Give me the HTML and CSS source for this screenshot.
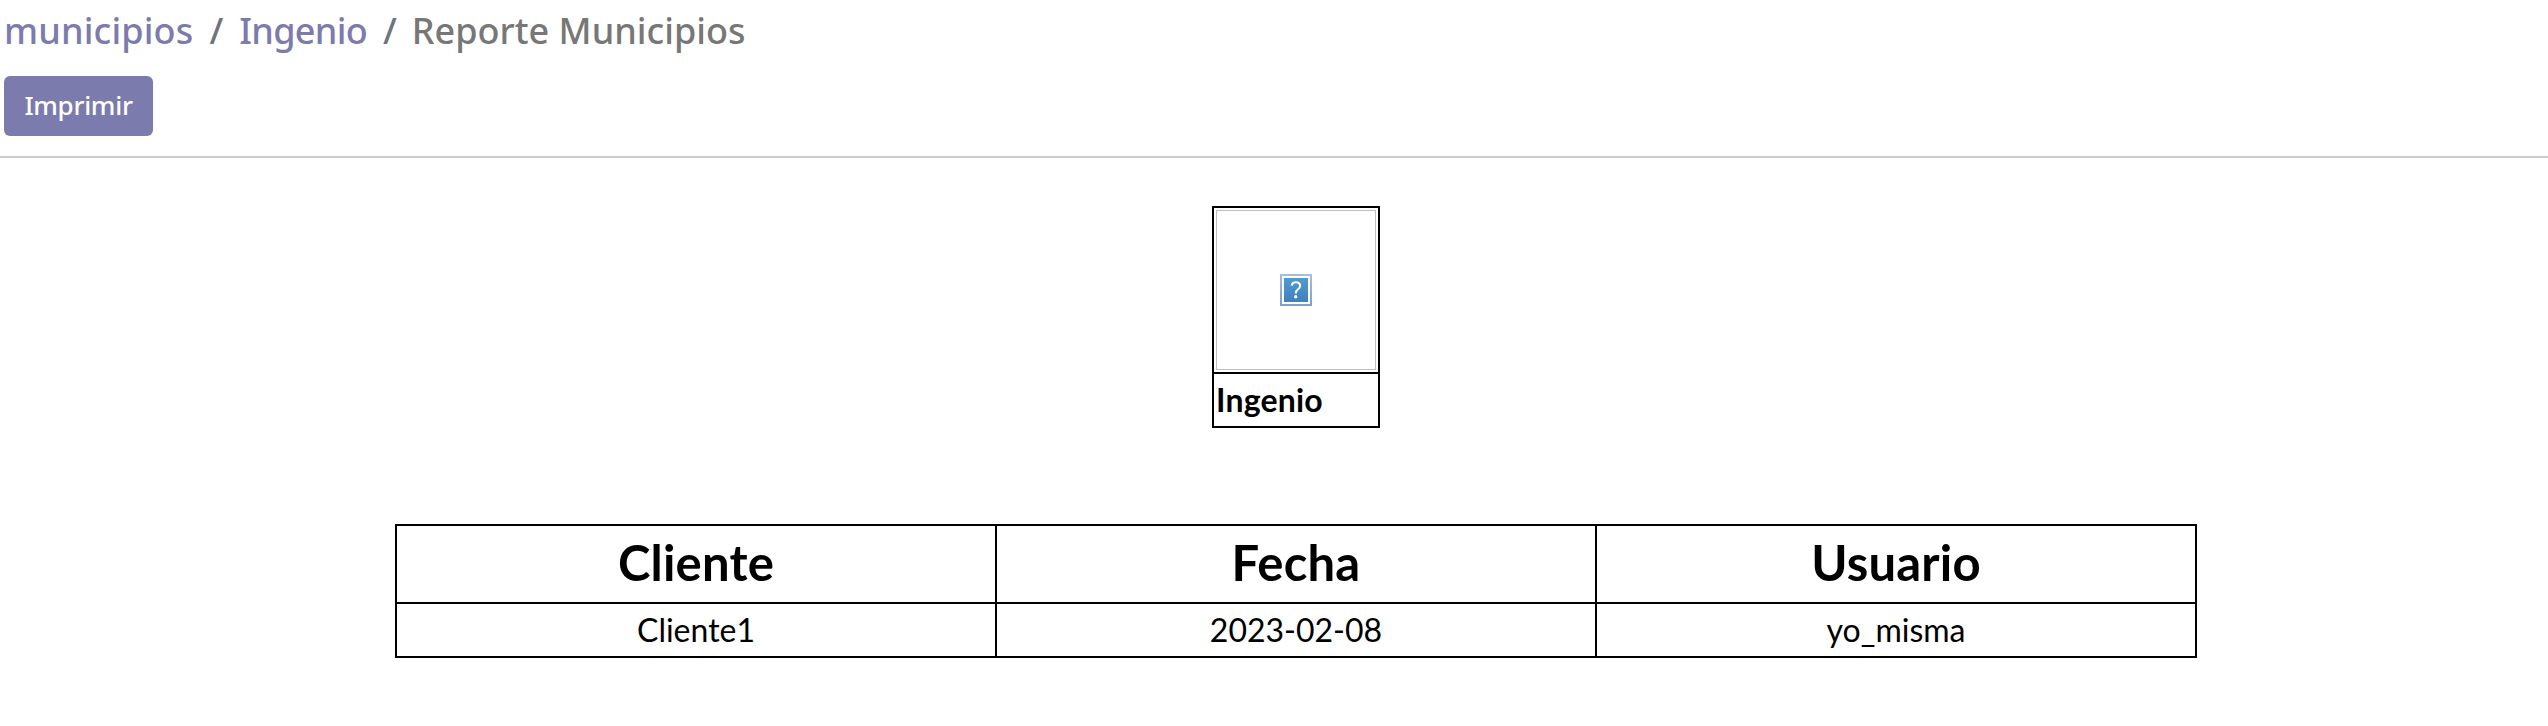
FILE: index.html
```html
<!DOCTYPE html>
<html lang="es">
<head>
<meta charset="utf-8">
<title>Reporte Municipios</title>
<link rel="stylesheet" href="styles.css">
</head>
<body>
<header class="control-panel">
  <nav class="breadcrumb">
    <a class="crumb crumb-first">municipios</a><span class="sep">/</span><a class="crumb crumb-second">Ingenio</a><span class="sep">/</span><span class="crumb current">Reporte Municipios</span>
  </nav>
  <button class="print" type="button">Imprimir</button>
</header>
<main class="report">
  <table class="card">
    <tr><td><div class="photo">
      <svg width="32" height="32" viewBox="0 0 32 32">
        <defs>
          <linearGradient id="frame" x1="0" y1="0" x2="0" y2="1"><stop offset="0" stop-color="#a9bedd"/><stop offset="1" stop-color="#7f9fcb"/></linearGradient>
          <linearGradient id="fill" x1="0" y1="0" x2="0" y2="1"><stop offset="0" stop-color="#509bd0"/><stop offset="1" stop-color="#4080bd"/></linearGradient>
        </defs>
        <rect width="32" height="32" fill="url(#frame)"/>
        <rect x="2" y="2" width="28" height="28" fill="#fff"/>
        <rect x="4" y="4" width="24" height="24" fill="url(#fill)"/>
        <path d="M11.7 11.6C12 9.5 13.6 8.3 15.9 8.3C18.4 8.3 20.1 9.7 20.1 11.9C20.1 13.5 19.2 14.4 18 15.3C16.4 16.4 15.8 17.2 15.8 19.4" fill="none" stroke="#fff" stroke-width="2"/>
        <circle cx="15.7" cy="22.7" r="1.7" fill="#fff"/>
      </svg>
    </div></td></tr>
    <tr><td class="name">Ingenio</td></tr>
  </table>
  <table class="details">
    <tr><th>Cliente</th><th>Fecha</th><th>Usuario</th></tr>
    <tr><td>Cliente1</td><td>2023-02-08</td><td>yo_misma</td></tr>
  </table>
</main>
</body>
</html>
```
FILE: styles.css
```css
* { box-sizing: border-box; }
body { margin: 0; background: #fff; color: #000; }
.control-panel {
  height: 158px;
  padding: 6px 4px 0;
  border-bottom: 2px solid #ccc;
  font-family: "Noto Sans", sans-serif;
  font-weight: 500;
}
.breadcrumb { display: flex; height: 50px; line-height: 50px; font-size: 36px; white-space: nowrap; }
.crumb { color: #7c7bad; }
.crumb-first { letter-spacing: 0.15px; }
.crumb-second { letter-spacing: -0.7px; }
.crumb.current { color: #777; margin-left: -1px; }
.sep { color: #6c757d; padding: 0 16px; }
.print {
  display: block;
  width: 149px;
  height: 60px;
  margin-top: 20px;
  padding: 0 0 2px;
  border: 0;
  border-radius: 6px;
  background: #7c7bad;
  color: #fff;
  font: 500 26px/58px "Noto Sans", sans-serif;
  letter-spacing: -0.3px;
}
.report {
  padding: 48px 0 0 44px;
  font: 32px/48px Lato, sans-serif;
}
table { border-collapse: collapse; margin: 0 auto; table-layout: fixed; }
td, th { border: 2px solid #000; padding: 2px; }
.card { width: 168px; }
.photo {
  display: flex;
  align-items: center;
  justify-content: center;
  width: 160px;
  height: 160px;
  margin: 0 auto;
  border: 1px solid #bfbfbf;
}
.name { font-weight: 700; letter-spacing: 0.2px; }
.details { width: 1802px; margin-top: 96px; text-align: center; }
th { padding: 0 2px 4px; font-size: 49px; line-height: 72px; font-weight: 700; letter-spacing: 0.2px; }
```
